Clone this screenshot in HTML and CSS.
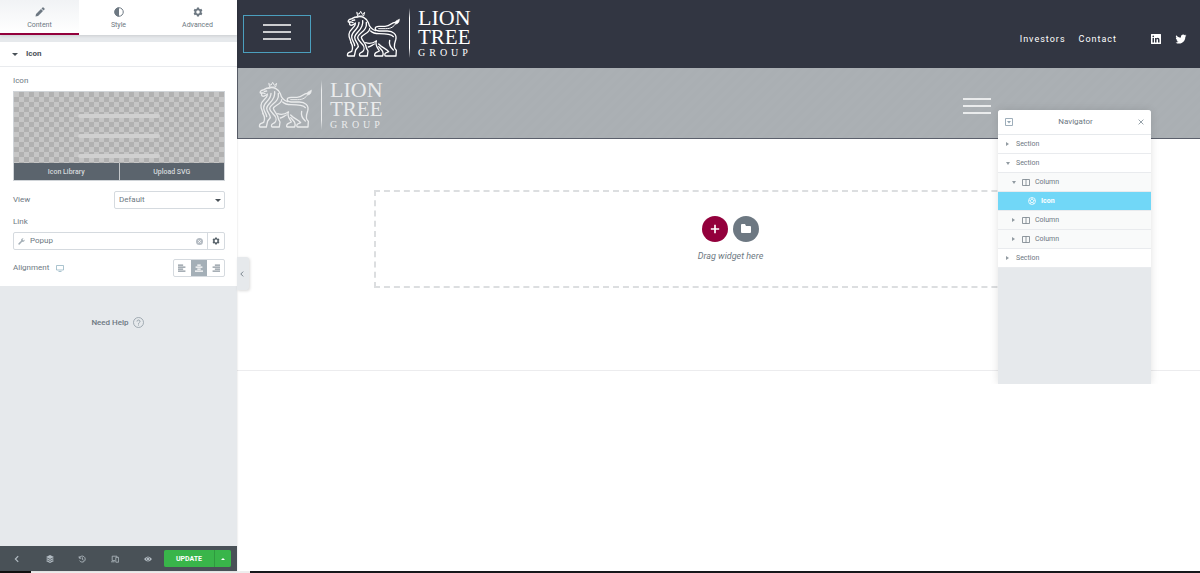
FILE: index.html
```html
<!DOCTYPE html>
<html lang="en">
<head>
    <meta charset="UTF-8">
    <meta name="viewport" content="width=device-width, initial-scale=1.0">
    <title>Lion Tree Group - Editor</title>
    <link rel="stylesheet" href="styles.css">
</head>
<body>
    <!-- shared shapes -->
    <svg class="defs" aria-hidden="true">
        <symbol id="lion" viewBox="34 28 165 141">
            <g fill="none" stroke="currentColor" stroke-width="4" stroke-linecap="round" stroke-linejoin="round">
                <path d="M69 45L66 35L73 41L78 32L83 41L90 35L87 45Z" stroke-width="3"/>
                <path d="M67 49C58 49 54 53 49 55C43 56 39 60 41 64L50 64L55 66M45 67C43 72 48 75 53 73C58 72 60 70 62 67M53 59L60 58"/>
                <path d="M67 49C82 45 96 52 101 66C104 80 112 87 123 90"/>
                <path d="M62 69C62 82 44 84 43 101C42 111 48 116 49 126"/>
                <path d="M73 65C73 88 51 90 51 108C51 120 60 125 60 135"/>
                <path d="M84 60C88 89 61 93 60 110C60 121 70 126 71 138"/>
                <path d="M95 65C99 92 71 96 69 110C69 118 78 125 84 132"/>
                <path d="M105 84C106 97 82 101 80 110C80 117 90 124 93 134"/>
                <path d="M49 126C56 138 54 146 51 152L42 156C37 159 38 166 40 166H59L63 148L71 138"/>
                <path d="M84 132C91 140 88 149 84 153L77 157C73 160 74 166 77 166H98L100 151C96 145 94 139 93 134"/>
                <path d="M93 126C104 130 116 127 125 121M101 139C109 137 114 132 119 130"/>
                <path d="M125 121C120 134 130 142 134 151L124 156C119 159 119 166 122 166H144C149 153 140 147 132 138M132 130C143 142 155 143 162 153L153 157C149 160 150 166 153 166H184L185 149C174 141 180 127 183 118C188 101 175 91 158 91H133C118 90 118 77 133 77H151C169 77 169 65 181 65"/>
                <path d="M176 108C170 100 151 99 133 99C120 99 112 95 108 91M165 119C162 132 167 140 176 148"/>
                <path d="M132 84H153C170 84 177 78 183 69" stroke-width="3"/>
                <path d="M181 66C183 58 190 60 194 55C194 64 191 69 184 70Z" fill="currentColor" stroke-width="2"/>
            </g>
        </symbol>
        <symbol id="menu" viewBox="0 0 28 16">
            <path d="M0 1H28M0 8H28M0 15H28" stroke="currentColor" stroke-width="1.500"/>
        </symbol>
        <symbol id="cog" viewBox="0 0 20 20">
            <path fill="currentColor" fill-rule="evenodd" d="M8 1h4l.6 2.500 1.600.9L16.700 3.700l2 3.500L17 9v2l1.700 1.800-2 3.500-2.500-.7-1.600.9L12 19H8l-.6-2.500-1.600-.9-2.500.7-2-3.500L3 11V9L1.300 7.200l2-3.500 2.500.7 1.600-.9zM10 6.500a3.500 3.500 0 1 0 0 7a3.500 3.500 0 1 0 0-7z"/>
        </symbol>
        <symbol id="column" viewBox="0 0 16 14">
            <path fill="none" stroke="currentColor" stroke-width="1.500" d="M1 1H15V13H1ZM8 1V13"/>
        </symbol>
    </svg>

    <div class="editor">
        <aside class="panel">
            <nav class="tabs">
                <button class="tab active">
                    <svg viewBox="0 0 20 20"><path fill="currentColor" d="M2 14L12 4L16 8L6 18L1 19ZM13 3L15 1Q16 0 17 1L19 3Q20 4 19 5L17 7Z"/></svg>
                    Content
                </button>
                <button class="tab">
                    <svg viewBox="0 0 20 20"><circle cx="10" cy="10" r="8.500" fill="none" stroke="currentColor" stroke-width="2"/><path fill="currentColor" d="M10 1A9 9 0 0 0 10 19Z"/></svg>
                    Style
                </button>
                <button class="tab">
                    <svg><use href="#cog"/></svg>
                    Advanced
                </button>
            </nav>

            <div class="controls">
                <h2 class="section-title"><i class="caret down"></i>Icon</h2>
                <div class="fields">
                    <p class="label">Icon</p>
                    <div class="media">
                        <div class="preview"><i></i><i></i><i></i></div>
                        <div class="media-buttons">
                            <button>Icon Library</button>
                            <button>Upload SVG</button>
                        </div>
                    </div>
                    <div class="row view-row">
                        <label for="view">View</label>
                        <div class="select">
                            <select id="view">
                                <option>Default</option>
                            </select>
                            <i class="caret down"></i>
                        </div>
                    </div>
                    <label class="label" for="link">Link</label>
                    <div class="link-box">
                        <svg class="wrench" viewBox="0 0 20 20"><path fill="currentColor" d="M1 16L9 8C8 4 11 0 16 1L13 4L14 6L16 7L19 4C20 9 16 12 12 11L4 19Q2 20 1 18Z"/></svg>
                        <input type="text" id="link" value="Popup">
                        <button class="clear" aria-label="Clear"><svg viewBox="0 0 20 20"><circle cx="10" cy="10" r="10" fill="#b5bcc3"/><path d="M6.500 6.500L13.500 13.500M13.500 6.500L6.500 13.500" stroke="#fff" stroke-width="2.500"/></svg></button>
                        <button class="options" aria-label="Link options"><svg><use href="#cog"/></svg></button>
                    </div>
                    <div class="row">
                        <span class="align-label">Alignment
                            <svg viewBox="0 0 16 14"><path fill="none" stroke="#8fb0bf" stroke-width="1.500" d="M1 1H15V10H1ZM5 13H11"/></svg>
                        </span>
                        <div class="align">
                            <button aria-label="Left"><svg viewBox="0 0 14 14"><path d="M0 2H9M0 5.500H13M0 9H9M0 12.500H13"/></svg></button>
                            <button class="on" aria-label="Center"><svg viewBox="0 0 14 14"><path d="M4 2H10M1 5.500H13M4 9H10M0 12.500H14"/></svg></button>
                            <button aria-label="Right"><svg viewBox="0 0 14 14"><path d="M5 2H14M1 5.500H14M5 9H14M1 12.500H14"/></svg></button>
                        </div>
                    </div>
                </div>
            </div>

            <a class="help" href="#">Need Help
                <svg viewBox="0 0 22 22"><circle cx="11" cy="11" r="10" fill="none" stroke="currentColor" stroke-width="1.500"/><path d="M8 9C8 5 14 5 14 9C14 11 11 11 11 13.500M11 15V17" fill="none" stroke="currentColor" stroke-width="1.800"/></svg>
            </a>

            <footer class="panel-footer">
                <button aria-label="Back"><svg viewBox="0 0 20 20"><path d="M13 3L6 10L13 17" fill="none" stroke="currentColor" stroke-width="3"/></svg></button>
                <button aria-label="Layers"><svg viewBox="0 0 20 20"><path fill="currentColor" d="M10 0L20 5L10 10L0 5ZM3 8L10 12L17 8L20 10L10 15L0 10ZM3 13L10 17L17 13L20 15L10 20L0 15Z"/></svg></button>
                <button aria-label="History"><svg viewBox="0 0 20 20"><path d="M3 3V8H8M3.500 7.500A7.500 7.500 0 1 1 4 14M11 6V11L14 13" fill="none" stroke="currentColor" stroke-width="2.200"/></svg></button>
                <button aria-label="Responsive"><svg viewBox="0 0 20 20"><path d="M10 14H3V3H15V5M0 17H9M12 6H19V18H12Z" fill="none" stroke="currentColor" stroke-width="2"/></svg></button>
                <button aria-label="Preview"><svg viewBox="0 0 20 20"><path fill="currentColor" fill-rule="evenodd" d="M0 10Q10-3 20 10Q10 23 0 10ZM10 5.500A4.500 4.500 0 1 0 10 14.500A4.500 4.500 0 1 0 10 5.500Z"/><circle cx="10" cy="10" r="3" fill="currentColor"/></svg></button>
                <div class="update">
                    <button>UPDATE</button>
                    <button aria-label="Save options"><i class="caret up"></i></button>
                </div>
            </footer>
            <button class="collapse" aria-label="Collapse panel"><svg viewBox="0 0 6 10"><path d="M5 1L1 5L5 9" fill="none" stroke="currentColor" stroke-width="1.500"/></svg></button>
        </aside>

        <main class="canvas">
            <header class="site-header">
                <a class="menu selected" href="#" aria-label="Menu"><svg><use href="#menu"/></svg></a>
                <div class="logo">
                    <svg><use href="#lion"/></svg>
                    <i class="bar"></i>
                    <div class="name">
                        <span class="lion">LION</span>
                        <span class="tree">TREE</span>
                        <span class="group">GROUP</span>
                    </div>
                </div>
                <nav class="site-nav">
                    <a href="#">Investors</a>
                    <a href="#">Contact</a>
                    <a class="linkedin" href="#" aria-label="LinkedIn"><svg viewBox="0 0 20 20"><path fill="currentColor" fill-rule="evenodd" d="M1 0H19Q20 0 20 1V19Q20 20 19 20H1Q0 20 0 19V1Q0 0 1 0ZM3 8V17H6V8ZM4.500 3A1.700 1.700 0 1 0 4.500 6.400A1.700 1.700 0 1 0 4.500 3ZM8 8V17H11V12Q11 10 12.500 10T14 12V17H17V11.500Q17 7.500 13.500 7.500Q12 7.500 11 9V8Z"/></svg></a>
                    <a href="#" aria-label="Twitter"><svg viewBox="0 0 24 22"><path fill="currentColor" d="M24 4L21.500 6C22 14 16 21 8 21C5 21 2 20 0 19C3 19 5 18 7 17C5 17 3 15.500 2.500 13.500H4.500C2 13 .7 11 .7 8.500L3 9C.7 7.500 0 4.500 1.500 2.500C4 5.500 7.500 7.500 12 7.700C11 3.500 14 1 17 1C18.500 1 19.500 1.500 20.500 2.500L23.500 1.300L21.500 4Z"/></svg></a>
                </nav>
            </header>

            <section class="sticky-header">
                <div class="logo">
                    <svg><use href="#lion"/></svg>
                    <i class="bar"></i>
                    <div class="name">
                        <span class="lion">LION</span>
                        <span class="tree">TREE</span>
                        <span class="group">GROUP</span>
                    </div>
                </div>
                <a class="menu" href="#" aria-label="Menu"><svg><use href="#menu"/></svg></a>
            </section>

            <section class="add-area">
                <div class="drop">
                    <div class="drop-buttons">
                        <button class="plus" aria-label="Add section"><svg viewBox="0 0 12 12"><path d="M6 1V11M1 6H11" stroke="currentColor" stroke-width="2"/></svg></button>
                        <button aria-label="Add template"><svg viewBox="0 0 12 12"><path fill="currentColor" d="M2 1H5L6 3H10Q11 3 11 4V9Q11 10 10 10H2Q1 10 1 9V2Q1 1 2 1Z"/></svg></button>
                    </div>
                    <p>Drag widget here</p>
                </div>
            </section>
        </main>
    </div>
    <div class="taskbar"></div>

    <!-- floating over the canvas -->
    <div class="navigator">
        <header>
            <button aria-label="Expand all"><svg viewBox="0 0 16 16"><path fill="none" stroke="#93a5b2" stroke-width="1.800" d="M1 1H15V15H1Z"/><path fill="#93a5b2" d="M4 6H12L8 11Z"/></svg></button>
            <h3>Navigator</h3>
            <button class="close" aria-label="Close"><svg viewBox="0 0 10 10"><path d="M1 1L9 9M9 1L1 9" stroke="#8a969f" stroke-width="1.500"/></svg></button>
        </header>
        <ul>
            <li><i class="caret right"></i>Section</li>
            <li><i class="caret down"></i>Section</li>
            <li class="col"><i class="caret down"></i><svg><use href="#column"/></svg>Column</li>
            <li class="widget"><svg viewBox="0 0 16 16"><path fill="none" stroke="currentColor" stroke-width="1.500" d="M8 1A7 7 0 1 0 8 15A7 7 0 1 0 8 1ZM8 1V4M2 6L5 7M14 6L11 7M4 14L6 11M12 14L10 11M8 4L11.500 7L10 11H6L4.500 7Z"/></svg>Icon</li>
            <li class="col"><i class="caret right"></i><svg><use href="#column"/></svg>Column</li>
            <li class="col"><i class="caret right"></i><svg><use href="#column"/></svg>Column</li>
            <li><i class="caret right"></i>Section</li>
        </ul>
    </div>
</body>
</html>
```
FILE: styles.css
```css
*{
    box-sizing: border-box;
    margin: 0;
    padding: 0;
}
body{
    min-height: 100vh;
    display: flex;
    flex-direction: column;
    font-family: Roboto, "Liberation Sans", sans-serif;
    font-size: 8px;
    line-height: 10px;
    color: #6d7882;
    background: #fff;
    position: relative;
}
button, input, select{
    font: inherit;
    color: inherit;
    border: none;
    background: none;
}
button{
    display: flex;
    align-items: center;
    justify-content: center;
}
a{
    color: inherit;
    text-decoration: none;
}
svg{
    display: block;
    flex-shrink: 0;
}
.defs{
    position: absolute;
    width: 0;
    height: 0;
}
.caret{
    display: block;
    width: 0;
    height: 0;
    border: 3px solid transparent;
}
.caret.down{
    border-top-color: currentColor;
    border-bottom: none;
}
.caret.up{
    border-width: 2px;
    border-bottom-color: currentColor;
    border-top: none;
}
.caret.right{
    border-left-color: currentColor;
    border-right: none;
}
.editor{
    flex: 1;
    display: flex;
}

/* left panel */
.panel{
    position: relative;
    width: 237px;
    flex-shrink: 0;
    display: flex;
    flex-direction: column;
    background: #e6e9ec;
    box-shadow: 0 0 2px rgba(0,0,0,0.15);
}
.tabs{
    display: flex;
    height: 35px;
    margin-bottom: 7px;
    background: #fff;
    box-shadow: 0 1px 3px rgba(0,0,0,0.12);
}
.tab{
    flex: 1;
    flex-direction: column;
    gap: 4px;
    padding-top: 3px;
    font-size: 7px;
    line-height: 8px;
    border-bottom: 2px solid transparent;
}
.tab svg{
    width: 10px;
    height: 10px;
}
.tab.active{
    background: linear-gradient(#f1f3f5, #fff);
    border-bottom-color: #93003c;
}
.controls{
    background: #fff;
}
.section-title{
    display: flex;
    align-items: center;
    gap: 8px;
    height: 25px;
    padding-left: 12px;
    font-size: 8px;
    font-weight: 700;
    color: #495157;
    border-bottom: 1px solid #e9ebee;
}
.fields{
    padding: 9px 12px 9px 13px;
}
.label{
    display: block;
}
.media{
    margin-top: 5px;
    height: 90px;
    display: flex;
    flex-direction: column;
    border: 1px solid #d0d4d8;
    background: repeating-conic-gradient(#b1b1b1 0 25%, #c6c6c6 0 50%) 0 0 / 10px 10px;
}
.preview{
    flex: 1;
    display: flex;
    flex-direction: column;
    align-items: center;
    justify-content: flex-end;
    gap: 16px;
    padding-bottom: 5px;
}
.preview i{
    width: 82px;
    height: 4px;
    border-radius: 2px;
    background: #d0d0d0;
}
.media-buttons{
    display: flex;
    gap: 1px;
    height: 17px;
    background: #c5c8cb;
}
.media-buttons button{
    flex: 1;
    padding-top: 1px;
    background: #5b646d;
    color: #d5d9dc;
    font-size: 7px;
    font-weight: 500;
}
.row{
    display: flex;
    align-items: center;
    justify-content: space-between;
    height: 18px;
}
.view-row{
    margin: 10px 0 8px;
}
.select{
    position: relative;
    width: 111px;
}
.select select{
    appearance: none;
    width: 100%;
    height: 18px;
    padding-left: 4px;
    border: 1px solid #d5dadf;
    border-radius: 2px;
    background: #fff;
}
.select .caret{
    position: absolute;
    right: 4px;
    top: 8px;
    color: #495157;
}
.link-box{
    display: flex;
    align-items: center;
    height: 18px;
    margin: 5px 0 9px;
    border: 1px solid #d5dadf;
    border-radius: 2px;
}
.wrench{
    width: 7px;
    height: 7px;
    margin: 0 5px 0 4px;
    color: #a4afb7;
}
.link-box input{
    flex: 1;
    min-width: 0;
    outline: none;
}
.clear{
    width: 16px;
}
.clear svg{
    width: 7px;
    height: 7px;
}
.options{
    width: 17px;
    height: 16px;
    border-left: 1px solid #d5dadf;
    color: #556068;
}
.options svg{
    width: 8px;
    height: 8px;
}
.align-label{
    display: flex;
    align-items: center;
    gap: 7px;
}
.align-label svg{
    width: 8px;
    height: 7px;
}
.align{
    display: flex;
    width: 52px;
    height: 18px;
    border: 1px solid #d5dadf;
    border-radius: 2px;
}
.align button{
    flex: 1;
}
.align svg{
    width: 8px;
    height: 8px;
    stroke: #8b959e;
    stroke-width: 2;
}
.align .on{
    background: #a4afb7;
}
.align .on svg{
    stroke: #fff;
}
.help{
    display: flex;
    align-items: center;
    justify-content: center;
    gap: 4px;
    margin-top: 31px;
    padding-right: 2px;
    font-weight: 500;
}
.help svg{
    width: 11px;
    height: 11px;
    color: #8b97a0;
}
.panel-footer{
    margin-top: auto;
    display: flex;
    align-items: center;
    height: 25px;
    padding: 0 6px 0 1px;
    background: #495157;
    color: #b3bcc3;
}
.panel-footer > button{
    flex: 1;
}
.panel-footer svg{
    width: 8px;
    height: 8px;
}
.update{
    display: flex;
    gap: 1px;
    width: 67px;
    height: 17px;
    border-radius: 2px;
    overflow: hidden;
    background: #2f9a3f;
    color: #fff;
}
.update button{
    width: 16px;
    background: #39b54a;
    font-size: 7px;
    font-weight: 700;
}
.update button:first-child{
    flex: 1;
}
.collapse{
    position: absolute;
    left: 237px;
    top: 257px;
    width: 12px;
    height: 33px;
    background: #e6e9ec;
    border-radius: 0 3px 3px 0;
    box-shadow: 1px 1px 3px rgba(0,0,0,0.15);
}
.collapse svg{
    width: 4px;
    height: 6px;
    margin-right: 3px;
}

/* page being edited */
.canvas{
    flex: 1;
    min-width: 0;
}
.site-header{
    display: flex;
    align-items: center;
    height: 68px;
    padding: 0 13px 0 6px;
    background: #323642;
    color: #fff;
}
.menu svg{
    width: 28px;
    height: 16px;
}
.menu.selected{
    display: flex;
    justify-content: center;
    width: 68px;
    height: 38px;
    padding-top: 8px;
    border: 1px solid #4b9fbe;
}
.logo{
    display: flex;
    align-items: center;
    padding-bottom: 2px;
    color: #fff;
}
.site-header .logo{
    margin-left: 35px;
}
.logo svg{
    width: 55px;
    height: 47px;
}
.bar{
    width: 1px;
    height: 50px;
    margin: 0 8px;
    background: linear-gradient(transparent, currentColor 20%, currentColor 80%, transparent);
}
.name{
    display: flex;
    flex-direction: column;
    font-family: "Liberation Serif", serif;
}
.lion{
    font-size: 22px;
    line-height: 19px;
}
.tree{
    font-size: 21px;
    line-height: 20px;
}
.group{
    font-size: 10px;
    line-height: 11px;
    letter-spacing: 4px;
}
.site-nav{
    margin-left: auto;
    padding-top: 9px;
    display: flex;
    align-items: center;
    gap: 13px;
    font-size: 9px;
    letter-spacing: 1px;
}
.site-nav svg{
    width: 12px;
    height: 10px;
}
.linkedin{
    margin-left: 20px;
}
.sticky-header{
    display: flex;
    align-items: center;
    justify-content: space-between;
    height: 71px;
    padding: 5px 209px 0 20px;
    background: repeating-linear-gradient(135deg, #abb0b4 0 4px, #aaafb3 4px 8px);
    border-bottom: 1px solid #5b606c;
    border-left: 1px solid #5b606c;
}
.sticky-header .logo{
    opacity: 0.75;
}
.sticky-header .menu{
    color: #fff;
}
.add-area{
    padding: 51px 113px 82px 137px;
    border-bottom: 1px solid #ececee;
}
.drop{
    display: flex;
    flex-direction: column;
    align-items: center;
    height: 98px;
    padding-top: 24px;
    border: 2px dashed #dcdee0;
}
.drop-buttons{
    display: flex;
    gap: 5px;
}
.drop-buttons button{
    width: 26px;
    height: 26px;
    border-radius: 50%;
    background: #6d7882;
    color: #fff;
}
.drop-buttons .plus{
    background: #93003c;
}
.drop-buttons svg{
    width: 12px;
    height: 12px;
}
.drop-buttons .plus svg{
    width: 10px;
    height: 10px;
}
.drop p{
    margin-top: 9px;
    font-size: 9px;
    font-style: italic;
}
.taskbar{
    height: 2px;
    background: linear-gradient(90deg, #111 31px, #eee 31px 250px, #16181b 250px);
}

/* navigator window */
.navigator{
    position: absolute;
    top: 110px;
    right: 49px;
    width: 153px;
    height: 274px;
    background: #e6e9ec;
    border-radius: 3px 3px 0 0;
    box-shadow: 0 0 8px rgba(0,0,0,0.12);
    clip-path: inset(-10px -10px 0 -10px);
}
.navigator header{
    display: flex;
    align-items: center;
    justify-content: space-between;
    height: 25px;
    padding: 0 7px;
    background: #fff;
    border-radius: 3px 3px 0 0;
    border-bottom: 1px solid #e6e9ec;
}
.navigator h3{
    font-size: 8px;
    font-weight: 400;
}
.navigator header svg{
    width: 8px;
    height: 8px;
}
.navigator .close svg{
    width: 6px;
    height: 6px;
}
.navigator ul{
    list-style: none;
}
.navigator li{
    display: flex;
    align-items: center;
    height: 19px;
    padding-left: 8px;
    font-size: 7px;
    background: #fff;
    border-bottom: 1px solid #e9ebee;
}
.navigator .caret{
    border-width: 2px;
    color: #929ba2;
    margin-right: 6px;
}
.navigator .caret.right{
    border-left-width: 3px;
    margin-right: 7px;
}
.navigator .caret.down{
    border-top-width: 3px;
}
.navigator li svg{
    width: 8px;
    height: 7px;
    margin-right: 5px;
}
.navigator .col{
    padding-left: 14px;
    background: #f9fafa;
}
.navigator .widget{
    padding-left: 30px;
    background: #71d7f7;
    color: #fff;
    font-weight: 700;
}
.navigator .widget svg{
    height: 8px;
}
```
